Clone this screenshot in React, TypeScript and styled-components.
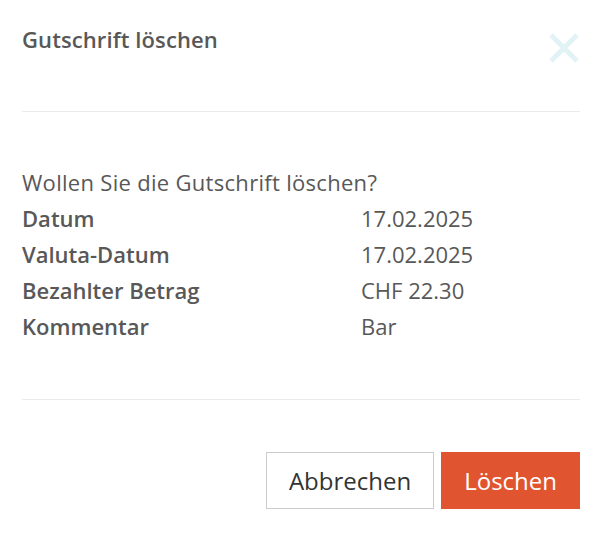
import { Fragment } from 'react';
import styled, { createGlobalStyle } from 'styled-components';

const GlobalStyle = createGlobalStyle`
  body {
    margin: 0;
    background: #ffffff;
    font-family: "Open Sans", "Noto Sans", sans-serif;
  }
`;

const Modal = styled.div`
  width: 605px;
  height: 537px;
  background: #fff;
  box-sizing: border-box;
  padding: 0 25px 0 22px;
  display: flex;
  flex-direction: column;
`;

const Header = styled.div`
  display: flex;
  justify-content: space-between;
  align-items: flex-start;
  height: 112px;
  border-bottom: 1px solid #eaeaea;
  box-sizing: border-box;
  padding-top: 25px;
`;

const Title = styled.h2`
  margin: 0;
  font-size: 22px;
  font-weight: 600;
  color: #585858;
  line-height: 28px;
  letter-spacing: 0.1px;
`;

const CloseButton = styled.button`
  border: none;
  background: none;
  padding: 0;
  margin-top: 8px;
  width: 32px;
  height: 30px;
  cursor: pointer;
`;

const Body = styled.div`
  height: 288px;
  border-bottom: 1px solid #eaeaea;
  box-sizing: border-box;
  padding-top: 52px;
  font-size: 22px;
  color: #585858;
`;

const Question = styled.p`
  margin: 0;
  line-height: 36px;
  letter-spacing: 0.3px;
`;

const Details = styled.dl`
  margin: 0;
  display: grid;
  grid-template-columns: 339px 1fr;
  line-height: 36px;
`;

const Label = styled.dt`
  font-weight: 600;
`;

const Value = styled.dd`
  margin: 0;
`;

const Footer = styled.div`
  display: flex;
  justify-content: flex-end;
  gap: 7px;
  padding-top: 52px;
`;

const Button = styled.button<{ $primary?: boolean }>`
  height: 57px;
  box-sizing: border-box;
  padding: 0 22px;
  font-family: inherit;
  font-size: 24px;
  cursor: pointer;
  border: 1px solid ${({ $primary }) => ($primary ? '#e0552f' : '#cccccc')};
  background: ${({ $primary }) => ($primary ? '#e0552f' : '#ffffff')};
  color: ${({ $primary }) => ($primary ? '#ffffff' : '#333333')};
`;

const rows = [
  ['Datum', '17.02.2025'],
  ['Valuta-Datum', '17.02.2025'],
  ['Bezahlter Betrag', 'CHF 22.30'],
  ['Kommentar', 'Bar'],
];

export default function App() {
  return (
    <>
      <GlobalStyle />
      <Modal>
        <Header>
          <Title>Gutschrift löschen</Title>
          <CloseButton aria-label="Schliessen">
            <svg width="32" height="30" viewBox="0 0 32 30">
              <path d="M3 2 L29 28 M29 2 L3 28" stroke="#e2f3f6" strokeWidth="5" />
            </svg>
          </CloseButton>
        </Header>
        <Body>
          <Question>Wollen Sie die Gutschrift löschen?</Question>
          <Details>
            {rows.map(([label, value]) => (
              <Fragment key={label}>
                <Label>{label}</Label>
                <Value>{value}</Value>
              </Fragment>
            ))}
          </Details>
        </Body>
        <Footer>
          <Button>Abbrechen</Button>
          <Button $primary>Löschen</Button>
        </Footer>
      </Modal>
    </>
  );
}
